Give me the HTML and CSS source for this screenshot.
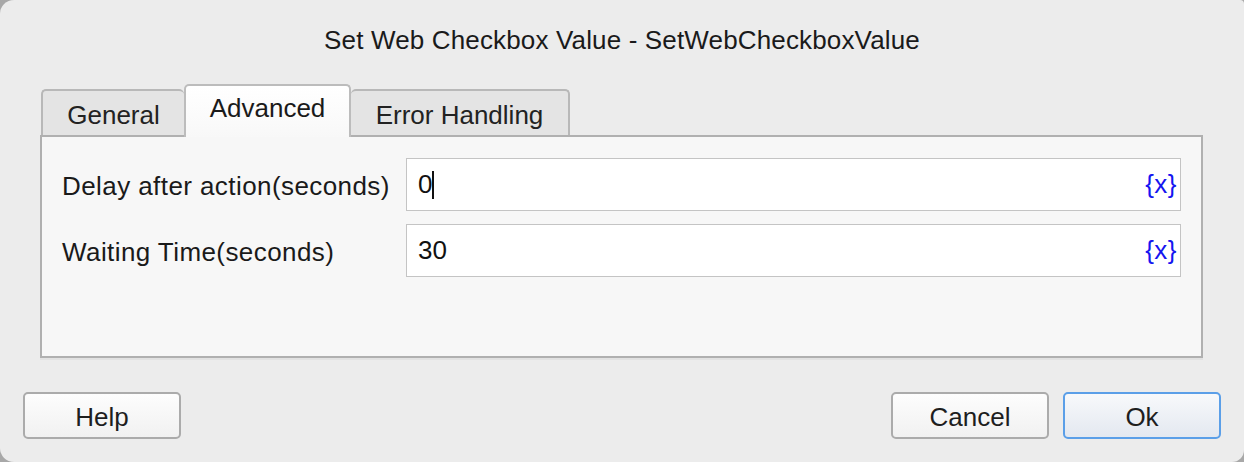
FILE: index.html
```html
<!DOCTYPE html>
<html>
<head>
<meta charset="utf-8">
<link rel="stylesheet" href="styles.css">
</head>
<body>
<div class="window">
  <div class="title">Set Web Checkbox Value - SetWebCheckboxValue</div>
  <div class="tabs">
    <div class="tab tab-general">General</div>
    <div class="tab tab-active">Advanced</div>
    <div class="tab tab-error">Error Handling</div>
  </div>
  <div class="panel">
    <div class="row">
      <div class="label">Delay after action(seconds)</div>
      <div class="field"><span class="value">0<span class="caret"></span></span><span class="var">{x}</span></div>
    </div>
    <div class="row">
      <div class="label">Waiting Time(seconds)</div>
      <div class="field"><span class="value">30</span><span class="var">{x}</span></div>
    </div>
  </div>
  <div class="footer">
    <div class="btn">Help</div>
    <div class="spacer"></div>
    <div class="btn">Cancel</div>
    <div class="btn btn-primary">Ok</div>
  </div>
</div>
</body>
</html>
```

FILE: styles.css
```css
html, body {
  margin: 0;
  padding: 0;
  background: #a8a8a8;
}
body {
  width: 1244px;
  height: 462px;
  overflow: hidden;
  font-family: "Liberation Sans", Arial, sans-serif;
  color: #1d1d1d;
}
.window {
  width: 1244px;
  height: 462px;
  box-sizing: border-box;
  background: #ececec;
  border-radius: 14px 4px 12px 14px;
  display: flex;
  flex-direction: column;
}
.title {
  height: 84px;
  padding-top: 25px;
  box-sizing: border-box;
  text-align: center;
  font-size: 26px;
  letter-spacing: 0.15px;
  color: #1a1a1a;
}
.tabs {
  display: flex;
  align-items: flex-end;
  margin-left: 41px;
  height: 51px;
  position: relative;
  z-index: 1;
}
.tab {
  box-sizing: border-box;
  height: 46px;
  background: #e4e4e4;
  border: 2px solid #b8b8b8;
  border-bottom: none;
  border-radius: 5px 5px 0 0;
  font-size: 26px;
  color: #222;
  display: flex;
  align-items: center;
  justify-content: center;
  padding-top: 4px;
}
.tab-general { width: 143px; border-right: none; }
.tab-error { width: 219px; border-left: none; }
.tab-active {
  width: 167px;
  height: 53px;
  margin-bottom: -2px;
  background: linear-gradient(#ffffff, #f8f8f8);
  border: 2px solid #bcbcbc;
  border-bottom: none;
  padding-top: 0;
  padding-bottom: 6px;
  color: #1a1a1a;
}
.panel {
  margin: 0 41px 0 40px;
  height: 223px;
  box-sizing: border-box;
  background: #f7f7f7;
  border: 2px solid #b0b0b0;
  box-shadow: 0 2px 0 #e2e2e2;
  padding: 21px 20px 0 20px;
  display: flex;
  flex-direction: column;
  gap: 13px;
}
.row {
  display: flex;
  align-items: center;
  height: 53px;
}
.label {
  width: 344px;
  font-size: 26px;
  letter-spacing: 0.42px;
  color: #1a1a1a;
  padding-top: 4px;
}
.field {
  flex: 1;
  height: 53px;
  box-sizing: border-box;
  background: #fff;
  border: 1px solid #c4c4c4;
  display: flex;
  align-items: center;
  justify-content: space-between;
  padding: 0 3px 0 11px;
}
.value {
  font-size: 26px;
  color: #111;
  display: flex;
  align-items: center;
}
.caret {
  display: inline-block;
  width: 2px;
  height: 28px;
  background: #111;
  margin-left: 0;
}
.var {
  font-size: 26px;
  letter-spacing: 0.5px;
  color: #1515f0;
}
.footer {
  display: flex;
  align-items: center;
  padding: 34px 23px 0 23px;
  gap: 14px;
}
.spacer { flex: 1; }
.btn {
  width: 158px;
  height: 47px;
  box-sizing: border-box;
  border: 2px solid #ababab;
  border-radius: 5px;
  background: linear-gradient(#fdfdfd, #f1f1f1);
  display: flex;
  align-items: center;
  justify-content: center;
  padding-top: 3px;
  font-size: 26px;
  color: #1e1e1e;
}
.btn-primary {
  border-color: #5b9fe8;
  background: linear-gradient(#f8f9fb, #e3e8f0);
}
```
